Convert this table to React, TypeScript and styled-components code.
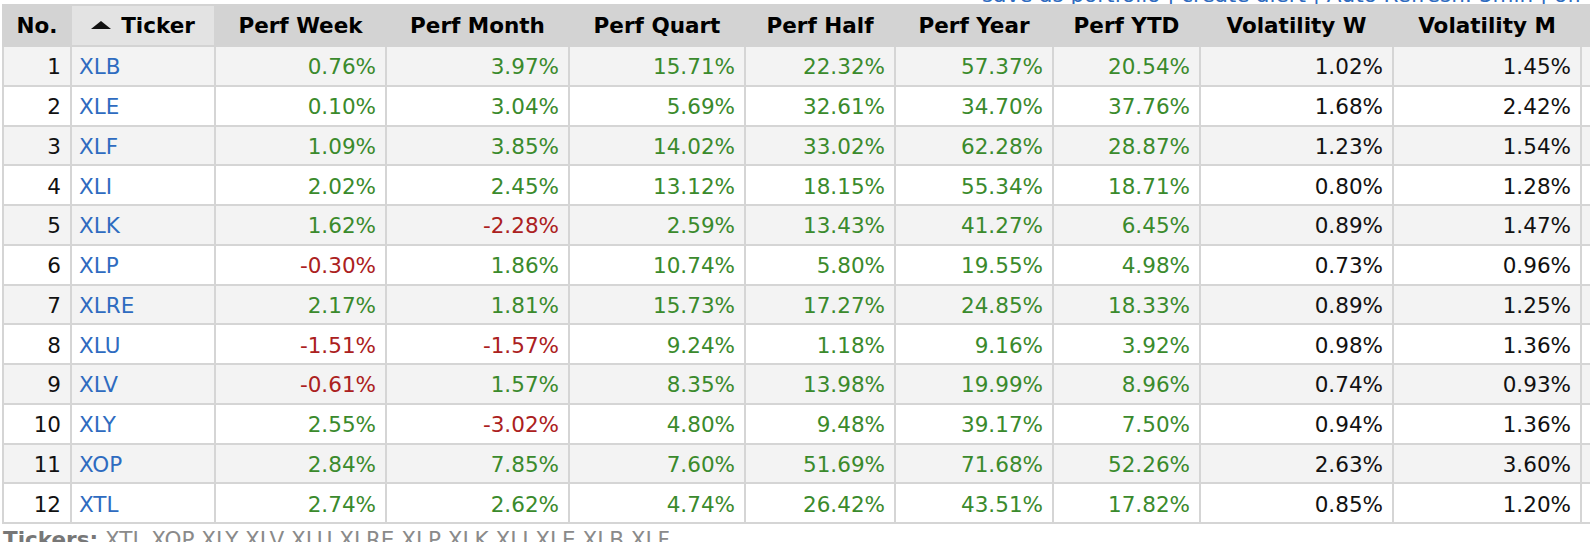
import React from 'react';
import styled, { createGlobalStyle } from 'styled-components';

type Row = {
    no: number;
    ticker: string;
    perf: string[];
    vol: string[];
};

const rows: Row[] = [
    { no: 1, ticker: 'XLB', perf: ['0.76%', '3.97%', '15.71%', '22.32%', '57.37%', '20.54%'], vol: ['1.02%', '1.45%'] },
    { no: 2, ticker: 'XLE', perf: ['0.10%', '3.04%', '5.69%', '32.61%', '34.70%', '37.76%'], vol: ['1.68%', '2.42%'] },
    { no: 3, ticker: 'XLF', perf: ['1.09%', '3.85%', '14.02%', '33.02%', '62.28%', '28.87%'], vol: ['1.23%', '1.54%'] },
    { no: 4, ticker: 'XLI', perf: ['2.02%', '2.45%', '13.12%', '18.15%', '55.34%', '18.71%'], vol: ['0.80%', '1.28%'] },
    { no: 5, ticker: 'XLK', perf: ['1.62%', '-2.28%', '2.59%', '13.43%', '41.27%', '6.45%'], vol: ['0.89%', '1.47%'] },
    { no: 6, ticker: 'XLP', perf: ['-0.30%', '1.86%', '10.74%', '5.80%', '19.55%', '4.98%'], vol: ['0.73%', '0.96%'] },
    { no: 7, ticker: 'XLRE', perf: ['2.17%', '1.81%', '15.73%', '17.27%', '24.85%', '18.33%'], vol: ['0.89%', '1.25%'] },
    { no: 8, ticker: 'XLU', perf: ['-1.51%', '-1.57%', '9.24%', '1.18%', '9.16%', '3.92%'], vol: ['0.98%', '1.36%'] },
    { no: 9, ticker: 'XLV', perf: ['-0.61%', '1.57%', '8.35%', '13.98%', '19.99%', '8.96%'], vol: ['0.74%', '0.93%'] },
    { no: 10, ticker: 'XLY', perf: ['2.55%', '-3.02%', '4.80%', '9.48%', '39.17%', '7.50%'], vol: ['0.94%', '1.36%'] },
    { no: 11, ticker: 'XOP', perf: ['2.84%', '7.85%', '7.60%', '51.69%', '71.68%', '52.26%'], vol: ['2.63%', '3.60%'] },
    { no: 12, ticker: 'XTL', perf: ['2.74%', '2.62%', '4.74%', '26.42%', '43.51%', '17.82%'], vol: ['0.85%', '1.20%'] },
];

const columns = [
    { label: 'No.', width: 68 },
    { label: 'Ticker', width: 144 },
    { label: 'Perf Week', width: 171 },
    { label: 'Perf Month', width: 183 },
    { label: 'Perf Quart', width: 176 },
    { label: 'Perf Half', width: 150 },
    { label: 'Perf Year', width: 158 },
    { label: 'Perf YTD', width: 147 },
    { label: 'Volatility W', width: 193 },
    { label: 'Volatility M', width: 188 },
    { label: 'Recom', width: 120 },
];

const GlobalStyle = createGlobalStyle`
    html, body {
        margin: 0;
        padding: 0;
        background: #ffffff;
        overflow: hidden;
    }
    body {
        font-family: "DejaVu Sans", Verdana, sans-serif;
        font-size: 21.5px;
        color: #000;
    }
`

const Page = styled.div`
    width: 1700px;
    padding-left: 2px;
`

// only the bottom edge of the links line above the table is in view
const TopStrip = styled.div`
    height: 4px;
    overflow: hidden;
    display: flex;
    justify-content: space-between;
    align-items: flex-start;
    width: 1580px;
    line-height: 21.5px;
`

const TotalText = styled.span`
    color: #a0a0a0;
    padding-left: 8px;
    margin-top: -18px;
`

const TopLinks = styled.span`
    color: #2e6bc0;
    margin-top: -16px;
`

const Table = styled.table`
    border-collapse: collapse;
    table-layout: fixed;
    width: 1698px;
`

const HeadCell = styled.th<{ $sorted?: boolean }>`
    background: ${p => (p.$sorted ? '#e3e3e3' : '#d3d3d3')};
    border: 2px solid #d3d3d3;
    height: 39px;
    padding: 0;
    font-weight: bold;
    text-align: center;
    white-space: nowrap;
    overflow: hidden;
`

const SortArrow = styled.svg`
    width: 20px;
    height: 8px;
    margin-right: 10px;
    vertical-align: 4px;
`

const BodyRow = styled.tr<{ $odd: boolean }>`
    background: ${p => (p.$odd ? '#f3f3f3' : '#ffffff')};
`

const Cell = styled.td<{ $tone?: 'up' | 'down' | 'plain' | 'link'; $left?: boolean }>`
    border: 2px solid #d5d5d5;
    height: 35.75px;
    padding: 2px 9px 0 7px;
    text-align: ${p => (p.$left ? 'left' : 'right')};
    white-space: nowrap;
    overflow: hidden;
    color: ${p =>
        p.$tone === 'up' ? '#3a8a2c'
        : p.$tone === 'down' ? '#ab2020'
        : p.$tone === 'link' ? '#2e6bc0'
        : '#111111'};
`

const TickerLine = styled.div`
    padding: 3px 0 0 1px;
    color: #8a8a8a;
    white-space: nowrap;
`

const TickerLabel = styled.b`
    color: #777777;
`

const toneOf = (v: string) => (v.startsWith('-') ? 'down' : 'up');

const App = () => {
    return (
        <>
            <GlobalStyle />
            <Page>
                <TopStrip>
                    <TotalText>Total: 12 #1</TotalText>
                    <TopLinks>save as portfolio | create alert | Auto Refresh: 3min | off</TopLinks>
                </TopStrip>
                <Table>
                    <colgroup>
                        {columns.map(c => (
                            <col key={c.label} style={{ width: c.width }} />
                        ))}
                    </colgroup>
                    <thead>
                        <tr>
                            {columns.map(c => (
                                <HeadCell key={c.label} $sorted={c.label === 'Ticker'}>
                                    {c.label === 'Ticker' && (
                                        <SortArrow viewBox="0 0 20 8">
                                            <polygon points="10,0 20,8 0,8" fill="#111" />
                                        </SortArrow>
                                    )}
                                    {c.label}
                                </HeadCell>
                            ))}
                        </tr>
                    </thead>
                    <tbody>
                        {rows.map(r => (
                            <BodyRow key={r.ticker} $odd={r.no % 2 === 1}>
                                <Cell $tone="plain">{r.no}</Cell>
                                <Cell $tone="link" $left>{r.ticker}</Cell>
                                {r.perf.map((v, i) => (
                                    <Cell key={i} $tone={toneOf(v)}>{v}</Cell>
                                ))}
                                {r.vol.map((v, i) => (
                                    <Cell key={'v' + i} $tone="plain">{v}</Cell>
                                ))}
                                <Cell $tone="plain">1.80</Cell>
                            </BodyRow>
                        ))}
                    </tbody>
                </Table>
                <TickerLine>
                    <TickerLabel>Tickers:</TickerLabel> XTL XOP XLY XLV XLU XLRE XLP XLK XLI XLE XLB XLF
                </TickerLine>
            </Page>
        </>
    );
};

export default App;
